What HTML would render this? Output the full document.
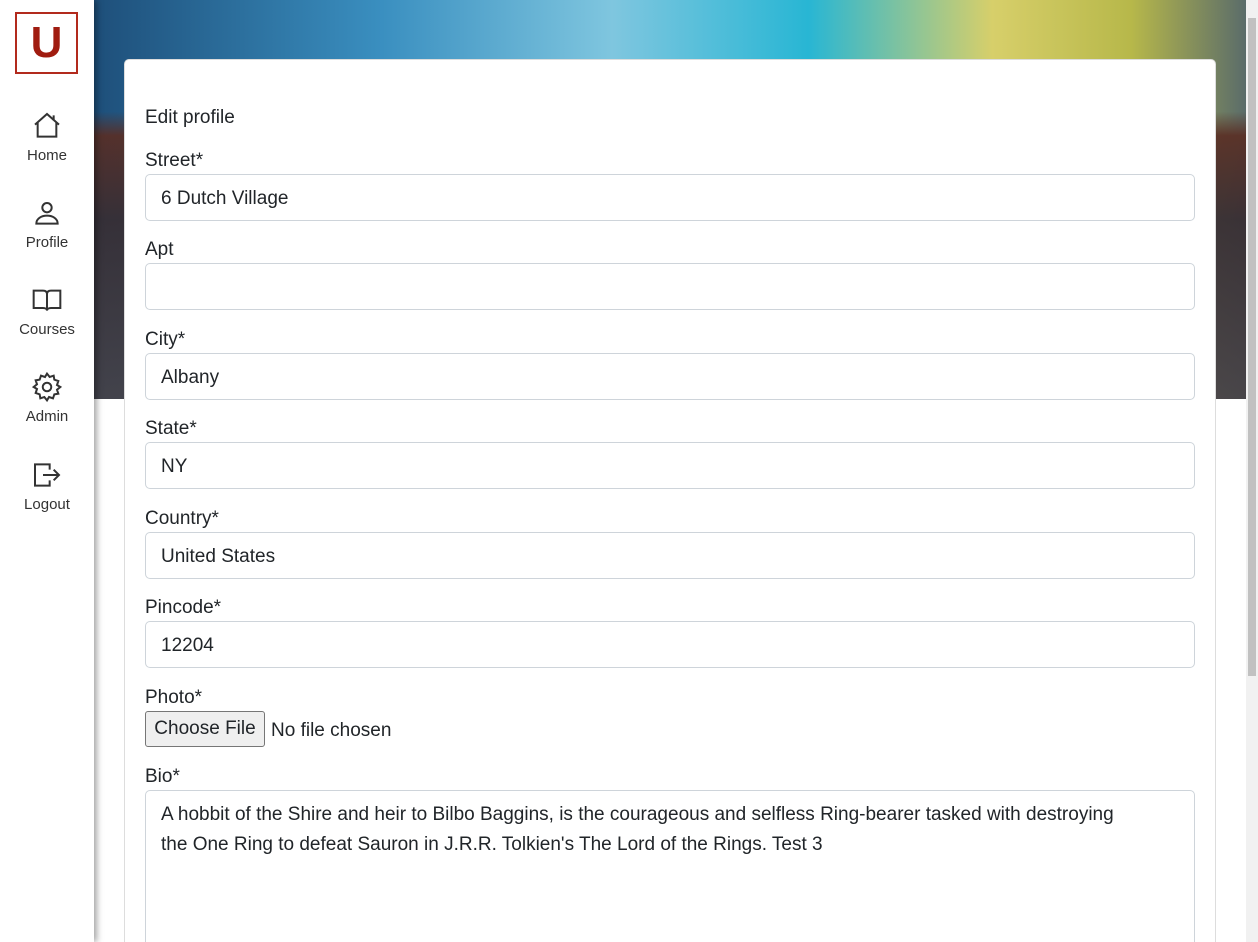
<!DOCTYPE html>
<html style="width:1258px;height:942px;overflow:hidden"><head><style>
*{box-sizing:border-box;margin:0;padding:0}
body{width:1258px;height:942px;overflow:hidden;background:#fff;font-family:"Liberation Sans",sans-serif;color:#212529;position:relative}
.hero{position:absolute;left:94px;top:0;width:1152px;height:399px;
background:
linear-gradient(180deg,rgba(0,0,0,0) 0,rgba(0,0,0,0) 28%,rgba(90,45,35,.9) 34%,rgba(55,45,50,.92) 55%,rgba(70,65,70,.9) 100%),
linear-gradient(90deg,#1e4f7a 0%,#3a8fc0 25%,#7fc6df 45%,#28b6d4 62%,#d7cf6a 78%,#b7b84a 90%,#5a6c6a 100%);}
.side{position:absolute;left:0;top:0;width:94px;height:942px;background:#fff;box-shadow:3px 0 6px rgba(0,0,0,.35);z-index:3}
.logo{position:absolute;left:15px;top:12px;width:63px;height:62px;border:2px solid #b22a1d;color:#a01c10;font-weight:bold;font-size:44px;text-align:center;line-height:58px}
.nav{position:absolute;left:0;width:94px;text-align:center;font-size:15px;color:#333}
.nav svg{display:block;margin:0 auto 5px}
.scroll{position:absolute;right:0;top:0;width:12px;height:942px;background:#f1f1f1;z-index:3}
.thumb{position:absolute;right:2px;top:18px;width:8px;height:658px;background:#c1c1c1}
.card{position:absolute;left:124px;top:59px;width:1092px;height:883px;background:#fff;border:1px solid #ddd;border-bottom:none;border-radius:5px 5px 0 0;z-index:2;overflow:hidden}
.lbl{position:absolute;left:20px;font-size:19px;color:#212529}
.inp{position:absolute;left:20px;width:1050px;height:47px;border:1px solid #ced4da;border-radius:5px;font-size:19px;padding:12px 15px;line-height:22px}
.btn{position:absolute;left:20px;top:651px;width:120px;height:36px;background:#efefef;border:1px solid #767676;border-radius:3px;font-size:19px;text-align:center;line-height:34px}
</style></head><body>
<div class="hero"></div>
<div class="side">
<div class="logo">U</div>
<div class="nav" style="top:110px"><svg width="32" height="32" viewBox="0 0 24 24" fill="none" stroke="#333" stroke-width="1.5"><path d="M3 11L12 3l9 8M5 9.5V20h14V9.5M17 4v4"/></svg>Home</div>
<div class="nav" style="top:197px"><svg width="32" height="32" viewBox="0 0 24 24" fill="none" stroke="#333" stroke-width="1.5"><circle cx="12" cy="8" r="3.5"/><path d="M4 20c0-4 4-6 8-6s8 2 8 6z"/></svg>Profile</div>
<div class="nav" style="top:284px"><svg width="32" height="32" viewBox="0 0 24 24" fill="none" stroke="#333" stroke-width="1.5"><path d="M2 5h7c2 0 3 1 3 2.5V20c0-1-1-2-3-2H2zM22 5h-7c-2 0-3 1-3 2.5V20c0-1 1-2 3-2h7z"/></svg>Courses</div>
<div class="nav" style="top:371px"><svg width="32" height="32" viewBox="0 0 24 24" fill="none" stroke="#333" stroke-width="1.5"><circle cx="12" cy="12" r="3.2"/><path d="M12 2l2 2.5 3-1 .5 3 3 1-1 3L22 12l-2.5 2 1 3-3 .5-1 3-3-1L12 22l-2-2.5-3 1-.5-3-3-1 1-3L2 12l2.5-2-1-3 3-.5 1-3 3 1z"/></svg>Admin</div>
<div class="nav" style="top:459px"><svg width="32" height="32" viewBox="0 0 24 24" fill="none" stroke="#333" stroke-width="1.5"><path d="M14 8V4H3v16h11v-4M9 12h12M17 8l4 4-4 4"/></svg>Logout</div>
</div>
<div class="card">
<div class="lbl" style="top:47px">Edit profile</div>
<div class="lbl" style="top:90px">Street*</div>
<div class="inp" style="top:114px;padding-top:13px">6 Dutch Village</div>
<div class="lbl" style="top:179px">Apt</div>
<div class="inp" style="top:203px"></div>
<div class="lbl" style="top:269px">City*</div>
<div class="inp" style="top:293px;padding-top:13px">Albany</div>
<div class="lbl" style="top:358px">State*</div>
<div class="inp" style="top:382px;padding-top:13px">NY</div>
<div class="lbl" style="top:448px">Country*</div>
<div class="inp" style="top:472px;padding-top:13px">United States</div>
<div class="lbl" style="top:537px">Pincode*</div>
<div class="inp" style="top:561px;padding-top:13px">12204</div>
<div class="lbl" style="top:627px">Photo*</div>
<div class="btn">Choose File</div>
<div class="lbl" style="left:146px;top:660px">No file chosen</div>
<div class="lbl" style="top:706px">Bio*</div>
<div class="inp" style="top:730px;height:200px;line-height:30px;padding:9px 60px 8px 15px;font-size:19px">A hobbit of the Shire and heir to Bilbo Baggins, is the courageous and selfless Ring-bearer tasked with destroying the One Ring to defeat Sauron in J.R.R. Tolkien's The Lord of the Rings. Test 3</div>
</div>
<div class="scroll"><div class="thumb"></div></div>
</body></html>
